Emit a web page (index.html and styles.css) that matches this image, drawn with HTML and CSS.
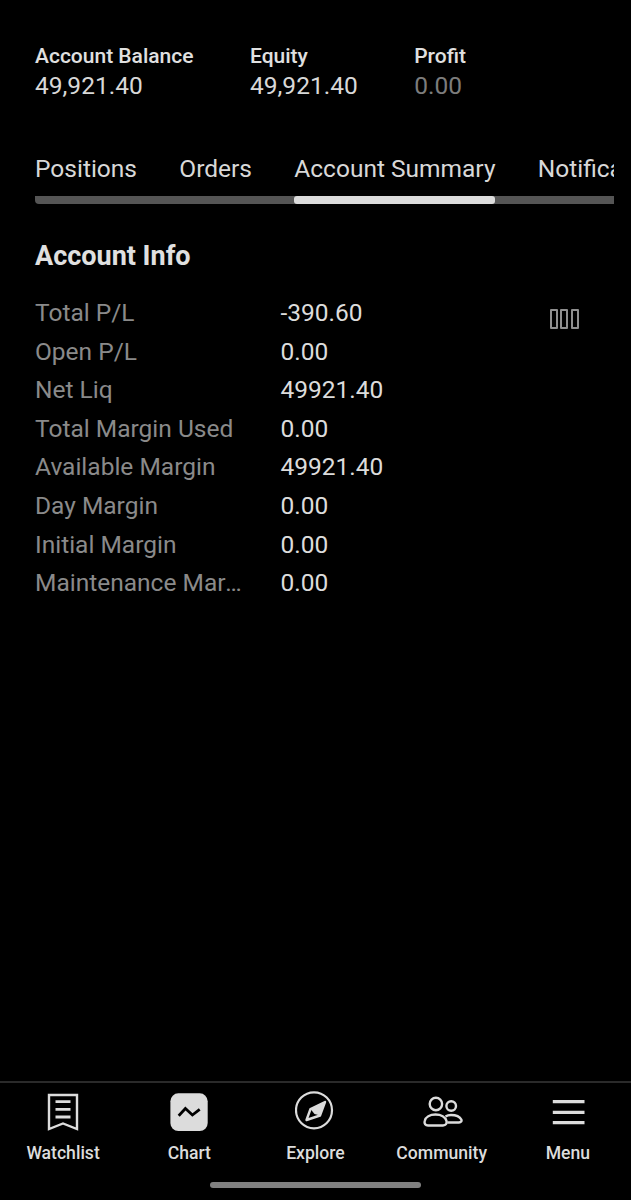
FILE: index.html
```html
<!DOCTYPE html>
<html lang="en">
<head>
<meta charset="utf-8">
<title>Account Summary</title>
<link rel="stylesheet" href="styles.css">
</head>
<body>
<div class="screen">
  <main class="content">
    <section class="stats">
      <div class="stat"><div class="stat-label">Account Balance</div><div class="stat-value">49,921.40</div></div>
      <div class="stat"><div class="stat-label">Equity</div><div class="stat-value">49,921.40</div></div>
      <div class="stat"><div class="stat-label">Profit</div><div class="stat-value muted">0.00</div></div>
    </section>
    <section class="tabs-wrap">
      <div class="tabs">
        <div class="tab"><span class="tab-text">Positions</span></div>
        <div class="tab"><span class="tab-text">Orders</span></div>
        <div class="tab active"><span class="tab-text">Account Summary</span></div>
        <div class="tab"><span class="tab-text">Notifications</span></div>
      </div>
    </section>
    <h2 class="title">Account Info</h2>
    <section class="info">
      <div class="rows">
        <div class="row"><span class="key">Total P/L</span><span class="val">-390.60</span></div>
        <div class="row"><span class="key">Open P/L</span><span class="val">0.00</span></div>
        <div class="row"><span class="key">Net Liq</span><span class="val">49921.40</span></div>
        <div class="row"><span class="key">Total Margin Used</span><span class="val">0.00</span></div>
        <div class="row"><span class="key">Available Margin</span><span class="val">49921.40</span></div>
        <div class="row"><span class="key">Day Margin</span><span class="val">0.00</span></div>
        <div class="row"><span class="key">Initial Margin</span><span class="val">0.00</span></div>
        <div class="row"><span class="key">Maintenance Margin</span><span class="val">0.00</span></div>
      </div>
      <div class="columns-icon"><i></i><i></i><i></i></div>
    </section>
  </main>
  <nav class="nav">
    <div class="nav-item">
      <svg class="icon" viewBox="0 0 36 40" width="36" height="40" fill="none" stroke="#dcdcdc" stroke-width="2.400">
        <path d="M4 4H32V38L18 32.500L4 38Z"/>
        <path d="M10.500 10.700H25.500M10.500 18.300H25.500M10.500 26H25.500" stroke-width="2.800"/>
      </svg>
      <span>Watchlist</span>
    </div>
    <div class="nav-item">
      <svg class="icon" viewBox="0 0 40 40" width="40" height="40">
        <rect x="1.400" y="2.300" width="37.300" height="37.700" rx="8" fill="#dcdcdc"/>
        <path d="M9.700 24.700L16.400 17.500L23.400 24L30.700 18.300" fill="none" stroke="#000" stroke-width="2.800"/>
      </svg>
      <span>Chart</span>
    </div>
    <div class="nav-item">
      <svg class="icon" viewBox="0 0 40 40" width="40" height="40">
        <circle cx="19" cy="19.300" r="18" fill="none" stroke="#dcdcdc" stroke-width="2.200"/>
        <path d="M30 11L15.500 18L11.500 29L25 24.500Z" fill="none" stroke="#dcdcdc" stroke-width="2.400" stroke-linejoin="round"/>
        <path d="M30 11L15.500 18L19.500 23L25 24.500Z" fill="#dcdcdc"/>
      </svg>
      <span>Explore</span>
    </div>
    <div class="nav-item">
      <svg class="icon" viewBox="0 0 42 40" width="42" height="40" fill="none" stroke="#dcdcdc" stroke-width="2.400">
        <circle cx="14.900" cy="13" r="6.200"/>
        <circle cx="30.200" cy="15" r="4.800"/>
        <path d="M7 34.500H22C25 34.500 26 32.500 25.500 30C24.500 26 20 23.500 14.500 23.500C9 23.500 4.500 26 3.700 30C3 32.500 4.500 34.500 7 34.500Z"/>
        <path d="M24.500 25.500C26 24.500 28 24 30 24C35 24 39 26 40.300 28.500C41 30 40 31.500 38 31.500H26.300"/>
      </svg>
      <span>Community</span>
    </div>
    <div class="nav-item">
      <svg class="icon" viewBox="0 0 34 40" width="34" height="40" fill="none" stroke="#dcdcdc" stroke-width="3.300">
        <path d="M1.800 10.700H33.500M1.800 21.300H33.500M1.800 31.700H33.500"/>
      </svg>
      <span>Menu</span>
    </div>
    <div class="home-indicator"></div>
  </nav>
</div>
</body>
</html>
```
FILE: styles.css
```css
* { box-sizing: border-box; }
html, body { margin: 0; background: #000; }
body { font-family: Roboto, "Noto Sans", sans-serif; color: #dcdcdc; }
.screen { width: 631px; height: 1200px; display: flex; flex-direction: column; background: #000; overflow: hidden; }
.content { flex: 1; padding: 44px 17.5px 0 35px; min-height: 0; }

.stats { display: flex; gap: 56.5px; }
.stat-label { font-size: 21px; font-weight: 500; line-height: 24px; color: #e0e0e0; }
.stat-value { margin-top: 3px; font-size: 24.5px; line-height: 29px; font-weight: 400; color: #d8d8d8; }
.stat-value.muted { color: #7c7c7c; }

.tabs-wrap { margin-top: 55px; overflow: hidden; }
.tabs { display: flex; gap: 42.3px; background: linear-gradient(#555, #555) left bottom / 100% 8px no-repeat; border-radius: 4px 0 0 4px; height: 49px; white-space: nowrap; }
.tab { flex: none; height: 49px; font-size: 24.5px; line-height: 28px; color: #d8d8d8; font-weight: 400; }
.tab.active { position: relative; }
.tab.active::after { content: ""; position: absolute; left: 0; right: 0; bottom: 0; height: 8px; background: #dcdcdc; border-radius: 3px; }

.title { margin: 36px 0 0; font-size: 27px; line-height: 32px; font-weight: 700; color: #e0e0e0; }

.info { margin-top: 21.5px; display: flex; align-items: flex-start; }
.rows { width: 400px; }
.row { display: flex; height: 38.55px; align-items: center; font-size: 24.5px; }
.key { width: 245.5px; padding-right: 38px; color: #8a8a8a; white-space: nowrap; overflow: hidden; text-overflow: ellipsis; flex: none; }
.val { color: #dcdcdc; }
.columns-icon { margin: 15px 0 0 114.5px; display: flex; gap: 2.5px; }
.columns-icon i { display: block; width: 8px; height: 20.5px; border: 2px solid #8f8f8f; border-radius: 1px; }

.nav { position: relative; flex: none; height: 119px; border-top: 2px solid #2a2a2a; display: grid; grid-template-columns: repeat(5, 1fr); align-items: start; padding-top: 8px; }
.nav-item { display: flex; flex-direction: column; align-items: center; font-size: 17.6px; font-weight: 500; color: #dcdcdc; line-height: 20px; }
.icon { display: block; height: 40px; margin-bottom: 12px; }
.home-indicator { position: absolute; left: 210px; bottom: 12px; width: 211px; height: 6px; border-radius: 3px; background: #808080; }
```
